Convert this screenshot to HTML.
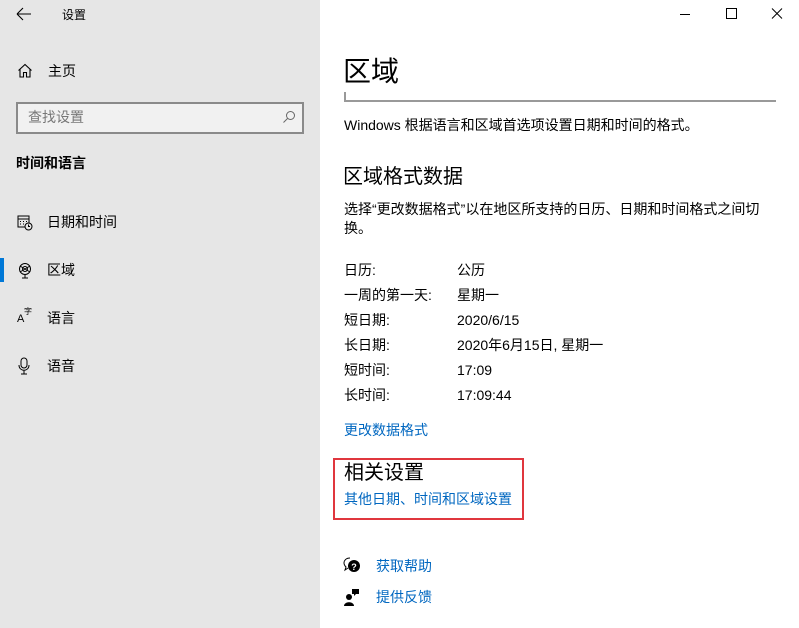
<!DOCTYPE html>
<html><head><meta charset="utf-8"><style>
*{margin:0;padding:0;box-sizing:border-box}
body{width:799px;height:628px;overflow:hidden;background:#fff;font-family:"Liberation Sans","Noto Sans CJK SC",sans-serif;color:#000;position:relative}
.side{position:absolute;left:0;top:0;width:320px;height:628px;background:#e6e6e6}
.a{position:absolute;white-space:nowrap}
.s14{font-size:14px}
.blue{color:#0067c0}
</style></head><body>
<div class="side">
  <svg class="a" style="left:16px;top:7px" width="16" height="14" viewBox="0 0 16 14"><path d="M1 7H15M1 7L7 1M1 7L7 13" stroke="#000" stroke-width="1.1" fill="none"/></svg>
  <div class="a" style="left:62px;top:6px;font-size:12px">设置</div>
  <svg class="a" style="left:17px;top:63px" width="16" height="15" viewBox="0 0 16 15"><path d="M1.5 7.5L8 1.5L14.5 7.5M3 6V14H6.5V9.5H9.5V14H13V6" stroke="#000" stroke-width="1.1" fill="none"/></svg>
  <div class="a s14" style="left:48px;top:61px">主页</div>
  <div class="a" style="left:16px;top:102px;width:288px;height:32px;border:2px solid #8a8a8a;background:#f1f1f1"></div>
  <div class="a s14" style="left:28px;top:107px;color:#777">查找设置</div>
  <svg class="a" style="left:282px;top:110px" width="14" height="14" viewBox="0 0 14 14"><circle cx="8.5" cy="5.5" r="4" stroke="#666" fill="none"/><path d="M5.5 8.5L1.5 12.5" stroke="#666"/></svg>
  <div class="a s14" style="left:16px;top:153px;font-weight:bold">时间和语言</div>
  <svg class="a" style="left:17px;top:214px" width="16" height="17" viewBox="0 0 16 17"><rect x="1" y="2" width="11" height="11" stroke="#000" fill="none"/><path d="M1 5H12M3 7.5h1M6 7.5h1M9 7.5h1M3 10h1M6 10h1" stroke="#000"/><circle cx="11.5" cy="12.5" r="3.5" fill="#e6e6e6" stroke="#000"/><path d="M11.5 10.5V12.5H13" stroke="#000" fill="none"/></svg>
  <div class="a s14" style="left:47px;top:212px">日期和时间</div>
  <div class="a" style="left:0;top:258px;width:4px;height:24px;background:#0078d7"></div>
  <svg class="a" style="left:17px;top:262px" width="16" height="17" viewBox="0 0 16 17"><circle cx="8" cy="7" r="5.5" stroke="#000" fill="none"/><circle cx="8" cy="7" r="2.5" stroke="#000" fill="none"/><path d="M3 4L13 10M3 10L13 4M8 13V16M5 16H11" stroke="#000"/></svg>
  <div class="a s14" style="left:47px;top:260px">区域</div>
  <div class="a" style="left:17px;top:313px;font-size:11px">A</div>
  <div class="a" style="left:24px;top:306px;font-size:8px">字</div>
  <div class="a s14" style="left:47px;top:308px">语言</div>
  <svg class="a" style="left:18px;top:357px" width="12" height="18" viewBox="0 0 12 18"><rect x="3" y="1" width="6" height="10" rx="3" stroke="#000" fill="none"/><path d="M1 8C1 15 11 15 11 8M6 13V17M3 17H9" stroke="#000" fill="none"/></svg>
  <div class="a s14" style="left:47px;top:356px">语音</div>
</div>
<svg class="a" style="left:680px;top:8px" width="104" height="12" viewBox="0 0 104 12"><path d="M0 6.5H10" stroke="#000"/><rect x="46.5" y="0.5" width="10" height="10" stroke="#000" fill="none"/><path d="M92 0.5L102 10.5M102 0.5L92 10.5" stroke="#000"/></svg>
<div class="a" style="left:343px;top:50px;font-size:28px">区域</div>
<div class="a" style="left:344px;top:92px;width:432px;height:10px;border-left:2px solid #999;border-bottom:2px solid #999"></div>
<div class="a s14" style="left:344px;top:115px">Windows 根据语言和区域首选项设置日期和时间的格式。</div>
<div class="a" style="left:343px;top:160px;font-size:20px">区域格式数据</div>
<div class="a s14" style="left:344px;top:200px;line-height:19px">选择“更改数据格式”以在地区所支持的日历、日期和时间格式之间切<br>换。</div>
<div class="a s14" style="left:344px;top:258px;line-height:25px">日历:<br>一周的第一天:<br>短日期:<br>长日期:<br>短时间:<br>长时间:</div>
<div class="a s14" style="left:457px;top:258px;line-height:25px">公历<br>星期一<br>2020/6/15<br>2020年6月15日, 星期一<br>17:09<br>17:09:44</div>
<div class="a s14 blue" style="left:344px;top:420px">更改数据格式</div>
<div class="a" style="left:333px;top:458px;width:191px;height:62px;border:2px solid #e0363e"></div>
<div class="a" style="left:344px;top:456px;font-size:20px">相关设置</div>
<div class="a s14 blue" style="left:344px;top:489px">其他日期、时间和区域设置</div>
<svg class="a" style="left:343px;top:557px" width="18" height="17" viewBox="0 0 18 17"><path d="M7 1C3 1 1 3.5 1 6C1 8 2 9 3 10L2 13L5 11" stroke="#000" fill="none"/><circle cx="11" cy="9" r="6" fill="#000"/><text x="11" y="13" font-size="9" fill="#fff" text-anchor="middle" font-family="Liberation Sans" font-weight="bold">?</text></svg>
<div class="a s14 blue" style="left:376px;top:556px">获取帮助</div>
<svg class="a" style="left:344px;top:588px" width="16" height="18" viewBox="0 0 16 18"><circle cx="5" cy="9" r="3" fill="#000"/><path d="M0 18C0 13 10 13 10 18Z" fill="#000"/><path d="M8 1H15V6H12L10 8V6H8Z" fill="#000"/></svg>
<div class="a s14 blue" style="left:376px;top:587px">提供反馈</div>
</body></html>
